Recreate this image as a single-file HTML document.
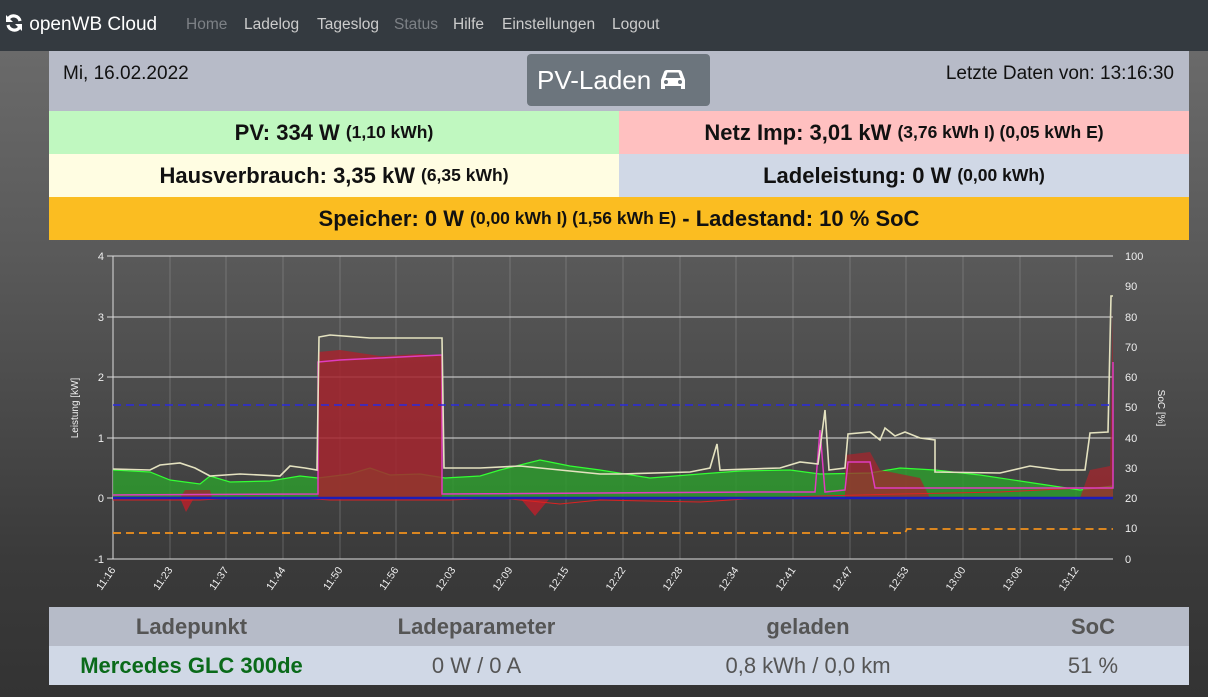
<!DOCTYPE html>
<html><head><meta charset="utf-8"><style>
*{margin:0;padding:0;box-sizing:border-box}
body{width:1208px;height:697px;overflow:hidden;font-family:"Liberation Sans",sans-serif;background:linear-gradient(#6e6e6e 0px,#5a5a5a 250px,#3a3a3a 560px,#333 697px);position:relative}
.nav{position:absolute;left:0;top:0;width:1208px;height:51px;background:#343a40;color:#fff}
.nav .brand{position:absolute;left:4px;top:13px;font-size:19px;color:#fff}
.nav a{position:absolute;top:16px;font-size:15.5px;color:#ccc}
.nav a.d{color:#7d8186}
.box{position:absolute;left:49px;width:1140px}
.hdr{top:51px;height:60px;background:#b7bbc8}
.c{display:flex;align-items:center;justify-content:center;font-weight:bold;font-size:22px;color:#111;position:absolute}
.c small{font-size:17.5px;margin-left:6px}
table{border-collapse:collapse;width:1140px}
</style></head><body>
<div class="nav">
<div class="brand"><svg width="20" height="20" viewBox="0 0 20 20" style="vertical-align:-3px"><path d="M16 8A6.5 6.5 0 0 0 4.5 5.5" stroke="#fff" stroke-width="3.2" fill="none"/><path d="M2 2v7h7z" fill="#fff"/><path d="M4 12A6.5 6.5 0 0 0 15.5 14.5" stroke="#fff" stroke-width="3.2" fill="none"/><path d="M18 18v-7h-7z" fill="#fff"/></svg> openWB Cloud</div>
<a class="d" style="left:186px">Home</a><a style="left:244px">Ladelog</a><a style="left:317px">Tageslog</a><a class="d" style="left:394px">Status</a><a style="left:453px">Hilfe</a><a style="left:502px">Einstellungen</a><a style="left:612px">Logout</a>
</div>
<div class="box hdr">
<div style="position:absolute;left:14px;top:12px;font-size:19px;color:#111">Mi, 16.02.2022</div>
<div style="position:absolute;left:478px;top:3px;width:183px;height:52px;background:#6c757d;border-radius:4px;color:#fff;font-size:26px;line-height:52px;padding-left:10px">PV-Laden <svg width="30" height="24" viewBox="0 0 30 24" style="vertical-align:-3px"><path d="M3 12l3-8c.5-1.5 1.5-2 3-2h12c1.5 0 2.5.5 3 2l3 8v9h-4v-3H7v3H3z" fill="#fff"/><path d="M7.5 10l2-5.5h11l2 5.5z" fill="#6c757d"/><circle cx="8" cy="14" r="2" fill="#6c757d"/><circle cx="22" cy="14" r="2" fill="#6c757d"/></svg></div>
<div style="position:absolute;right:15px;top:12px;font-size:19px;color:#111">Letzte Daten von: 13:16:30</div>
</div>
<div class="c" style="left:49px;top:111px;width:570px;height:43px;background:#c0f8c0">PV: 334 W<small>(1,10 kWh)</small></div>
<div class="c" style="left:619px;top:111px;width:570px;height:43px;background:#ffc0c0">Netz Imp: 3,01 kW<small>(3,76 kWh I) (0,05 kWh E)</small></div>
<div class="c" style="left:49px;top:154px;width:570px;height:43px;background:#fffde2">Hausverbrauch: 3,35 kW<small>(6,35 kWh)</small></div>
<div class="c" style="left:619px;top:154px;width:570px;height:43px;background:#d0d8e6">Ladeleistung: 0 W<small>(0,00 kWh)</small></div>
<div class="c" style="left:49px;top:197px;width:1140px;height:43px;background:#fbbd21">Speicher: 0 W<small>(0,00 kWh I) (1,56 kWh E)</small>&nbsp;- Ladestand: 10 % SoC</div>

<svg style="position:absolute;left:0;top:240px" width="1208" height="365" viewBox="0 240 1208 365" font-family="Liberation Sans,sans-serif" font-size="11" fill="#eee">
<g stroke="#aaa" stroke-width="0.6" opacity="0.6">
<line x1="170" y1="256" x2="170" y2="559"/><line x1="226" y1="256" x2="226" y2="559"/><line x1="283" y1="256" x2="283" y2="559"/><line x1="340" y1="256" x2="340" y2="559"/><line x1="396" y1="256" x2="396" y2="559"/><line x1="453" y1="256" x2="453" y2="559"/><line x1="510" y1="256" x2="510" y2="559"/><line x1="566" y1="256" x2="566" y2="559"/><line x1="623" y1="256" x2="623" y2="559"/><line x1="680" y1="256" x2="680" y2="559"/><line x1="736" y1="256" x2="736" y2="559"/><line x1="793" y1="256" x2="793" y2="559"/><line x1="850" y1="256" x2="850" y2="559"/><line x1="906" y1="256" x2="906" y2="559"/><line x1="963" y1="256" x2="963" y2="559"/><line x1="1020" y1="256" x2="1020" y2="559"/><line x1="1076" y1="256" x2="1076" y2="559"/>
</g>
<g stroke="#ddd" stroke-width="1">
<line x1="113" y1="256" x2="1113" y2="256"/><line x1="113" y1="317" x2="1113" y2="317"/><line x1="113" y1="377" x2="1113" y2="377"/><line x1="113" y1="438" x2="1113" y2="438"/><line x1="113" y1="559" x2="1113" y2="559"/><line x1="113" y1="256" x2="113" y2="559"/>
<line x1="107" y1="256" x2="113" y2="256"/><line x1="107" y1="317" x2="113" y2="317"/><line x1="107" y1="377" x2="113" y2="377"/><line x1="107" y1="438" x2="113" y2="438"/><line x1="107" y1="498" x2="113" y2="498"/><line x1="107" y1="559" x2="113" y2="559"/>
</g>
<g text-anchor="end"><text x="104" y="260">4</text><text x="104" y="321">3</text><text x="104" y="381">2</text><text x="104" y="442">1</text><text x="104" y="502">0</text><text x="104" y="563">-1</text></g>
<g><text x="1125" y="260">100</text><text x="1125" y="290">90</text><text x="1125" y="321">80</text><text x="1125" y="351">70</text><text x="1125" y="381">60</text><text x="1125" y="411">50</text><text x="1125" y="442">40</text><text x="1125" y="472">30</text><text x="1125" y="502">20</text><text x="1125" y="532">10</text><text x="1125" y="563">0</text></g>
<text transform="translate(78,408) rotate(-90)" text-anchor="middle" font-size="10">Leistung [kW]</text>
<text transform="translate(1158,408) rotate(90)" text-anchor="middle" font-size="10">SoC [%]</text>
<path d="M113,470 L150,472 L170,480 L200,484 L210,476 L230,482 L270,481 L300,476 L318,478 L350,474 L370,468 L390,475 L420,474 L445,478 L480,476 L500,470 L540,460 L570,466 L600,470 L650,478 L700,474 L740,471 L790,470 L820,474 L870,473 L900,468 L935,470 L980,475 L1040,484 L1080,490 L1113,486 L1113,498 L113,498Z" fill="#2e9a2e" opacity="0.85"/>
<polyline points="113,470 150,472 170,480 200,484 210,476 230,482 270,481 300,476 318,478 350,474 370,468 390,475 420,474 445,478 480,476 500,470 540,460 570,466 600,470 650,478 700,474 740,471 790,470 820,474 870,473 900,468 935,470 980,475 1040,484 1080,490 1113,486" fill="none" stroke="#3f3" stroke-width="1.2"/>
<path d="M318,498 L318,352 L340,350 L380,356 L420,354 L442,356 L442,498Z" fill="#a4252e" opacity="0.85"/>
<path d="M180,498 L185,490 L210,490 L212,498Z M845,498 L845,455 L870,452 L880,470 L920,478 L930,498Z M1080,498 L1090,470 L1110,466 L1113,310 L1113,498Z" fill="#a4252e" opacity="0.75"/>
<path d="M180,498 L186,512 L194,498 M520,498 L535,516 L550,498" fill="#a4252e"/>
<polyline points="113,500 200,500 250,497 300,498 330,500 450,500 500,498 560,504 600,500 700,502 760,498 820,496 900,494 1000,492 1080,488" fill="none" stroke="#d22" stroke-width="1"/>
<polyline points="113,495 318,494 318,362 340,360 380,358 420,356 442,355 442,494 760,492 815,492 820,430 825,492 845,490 848,462 870,462 875,488 905,488 1113,488 1113,362" fill="none" stroke="#e03cc0" stroke-width="1.5"/>
<polyline points="113,469 150,470 160,465 180,463 195,468 210,476 240,474 280,476 290,466 305,468 317,470 319,337 330,335 370,338 410,338 442,338 444,468 480,468 520,466 560,470 600,474 620,474 690,472 710,468 717,444 720,470 780,468 800,462 818,464 825,410 829,470 845,468 848,434 870,432 880,440 885,428 895,436 905,432 920,438 935,440 935,472 1000,473 1030,466 1060,470 1085,470 1090,433 1108,432 1111,296 1113,296" fill="none" stroke="#e4e2c0" stroke-width="1.6"/>
<line x1="113" y1="405" x2="1113" y2="405" stroke="#2a2ae0" stroke-width="1.5" stroke-dasharray="8,5"/>
<polyline points="113,533 905,533 907,529 1113,529" fill="none" stroke="#f0901c" stroke-width="1.8" stroke-dasharray="8,5"/>
<line x1="113" y1="498" x2="1113" y2="498" stroke="#1d1db8" stroke-width="2.5"/>
<g font-size="10.5" text-anchor="end">
<text transform="translate(116,570) rotate(-55)">11:16</text><text transform="translate(173,570) rotate(-55)">11:23</text><text transform="translate(229,570) rotate(-55)">11:37</text><text transform="translate(286,570) rotate(-55)">11:44</text><text transform="translate(343,570) rotate(-55)">11:50</text><text transform="translate(399,570) rotate(-55)">11:56</text><text transform="translate(456,570) rotate(-55)">12:03</text><text transform="translate(513,570) rotate(-55)">12:09</text><text transform="translate(569,570) rotate(-55)">12:15</text><text transform="translate(626,570) rotate(-55)">12:22</text><text transform="translate(683,570) rotate(-55)">12:28</text><text transform="translate(739,570) rotate(-55)">12:34</text><text transform="translate(796,570) rotate(-55)">12:41</text><text transform="translate(853,570) rotate(-55)">12:47</text><text transform="translate(909,570) rotate(-55)">12:53</text><text transform="translate(966,570) rotate(-55)">13:00</text><text transform="translate(1023,570) rotate(-55)">13:06</text><text transform="translate(1079,570) rotate(-55)">13:12</text>
</g>
</svg>

<div class="box" style="top:607px;height:78px">
<table style="font-size:22px;text-align:center">
<tr style="background:#b6bbc8;height:39px;color:#555;font-weight:bold"><td style="width:285px">Ladepunkt</td><td style="width:285px">Ladeparameter</td><td style="width:378px">geladen</td><td>SoC</td></tr>
<tr style="background:#d0d8e6;height:39px;color:#555"><td style="color:#0a6a1a;font-weight:bold">Mercedes GLC 300de</td><td>0 W / 0 A</td><td>0,8 kWh / 0,0 km</td><td>51 %</td></tr>
</table>
</div>
</body></html>
